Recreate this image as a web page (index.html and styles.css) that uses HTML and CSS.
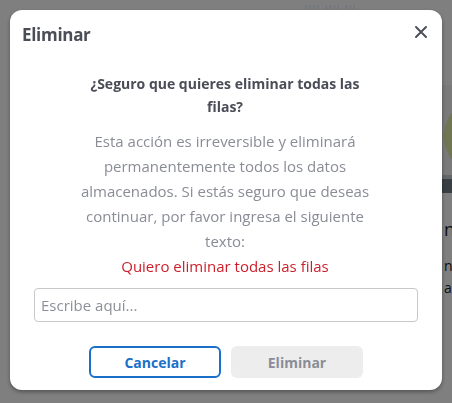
FILE: index.html
```html
<!DOCTYPE html>
<html lang="es">
<head>
<meta charset="utf-8">
<link rel="stylesheet" href="styles.css">
</head>
<body>
<div class="page">
  <div class="page-top">
    <span class="faint-text">ıııı ıııı ııı</span>
  </div>
  <div class="side">
    <div class="side-image"><div class="blob"></div></div>
    <div class="side-line-light"></div>
    <div class="side-bar"></div>
    <div class="side-title">nn</div>
    <div class="side-line">ne</div>
    <div class="side-line">ar</div>
  </div>
</div>
<div class="backdrop">
  <div class="modal">
    <div class="modal-header">
      <h2 class="modal-title">Eliminar</h2>
      <button class="close-btn" aria-label="Cerrar">
        <svg width="12" height="12" viewBox="0 0 12 12"><path d="M1 1 L11 11 M11 1 L1 11" stroke="#4a4d57" stroke-width="1.9" stroke-linecap="round"/></svg>
      </button>
    </div>
    <div class="modal-body">
      <p class="question">¿Seguro que quieres eliminar todas las filas?</p>
      <p class="desc">Esta acción es irreversible y eliminará permanentemente todos los datos almacenados. Si estás seguro que deseas continuar, por favor ingresa el siguiente texto:</p>
      <p class="confirm-text">Quiero eliminar todas las filas</p>
      <input class="confirm-input" type="text" placeholder="Escribe aquí...">
      <div class="actions">
        <button class="btn btn-outline">Cancelar</button>
        <button class="btn btn-disabled" disabled>Eliminar</button>
      </div>
    </div>
  </div>
</div>
</body>
</html>
```

FILE: styles.css
```css
* { box-sizing: border-box; }
html, body { margin: 0; padding: 0; height: 100%; }
body {
  font-family: "Open Sans", "Noto Sans", sans-serif;
  background: #fff;
  overflow: hidden;
}
.page {
  height: 100%;
  display: flex;
  flex-direction: column;
  align-items: flex-end;
}
.page-top {
  width: 100%;
  height: 30px;
  padding-left: 305px;
  font-size: 8px;
  line-height: 12px;
  color: #dcdcdc;
}
.faint-text { letter-spacing: 2px; }
.side {
  width: 10px;
  margin-top: 55px;
  display: flex;
  flex-direction: column;
}
.side-image {
  height: 90px;
  background: #f4f4f4;
  position: relative;
  overflow: hidden;
}
.blob {
  position: absolute;
  left: 2px;
  top: 22px;
  width: 40px;
  height: 58px;
  border-radius: 50%;
  background: #e2eca4;
}
.side-line-light {
  height: 4px;
  background: #c9cfd3;
}
.side-bar {
  height: 14px;
  background: #737e86;
}
.side-title {
  margin-top: 26px;
  font-size: 18px;
  color: #222;
  padding-left: 2px;
  line-height: 20px;
  white-space: nowrap;
}
.side-line {
  font-size: 14px;
  color: #222;
  padding-left: 2px;
  line-height: 22px;
  white-space: nowrap;
}
.side-title + .side-line { margin-top: 16px; }

.backdrop {
  position: fixed;
  inset: 0;
  background: rgba(0, 0, 0, 0.5);
  padding: 10px 10px 0 10px;
}
.modal {
  width: 432px;
  height: 380px;
  background: #fff;
  border-radius: 12px;
  box-shadow: 0 2px 4px rgba(0,0,0,0.35);
  padding: 14px 14px 0 12px;
}
.modal-header {
  display: flex;
  justify-content: space-between;
  align-items: flex-start;
}
.modal-title {
  margin: 0;
  font-size: 17px;
  font-weight: 700;
  color: #4a4d57;
  line-height: 20px;
  padding-top: 1px;
  letter-spacing: -0.3px;
}
.close-btn {
  border: 0;
  background: none;
  padding: 0;
  margin: 2px 1px 0 0;
  width: 12px;
  height: 12px;
  display: flex;
  cursor: pointer;
}
.modal-body {
  display: flex;
  flex-direction: column;
  align-items: center;
  text-align: center;
  padding-top: 27px;
}
.question {
  margin: 0;
  width: 300px;
  font-size: 14px;
  font-weight: 700;
  color: #4a4d57;
  line-height: 23px;
}
.desc {
  margin: 11px 0 0;
  width: 300px;
  font-size: 15px;
  color: #8a8d96;
  line-height: 25px;
}
.confirm-text {
  margin: 0;
  font-size: 15px;
  color: #cc1f2b;
  line-height: 25px;
}
.confirm-input {
  margin-top: 9px;
  width: 384px;
  height: 34px;
  border: 1px solid #c8c8cc;
  border-radius: 4px;
  padding: 0 6px;
  font-family: inherit;
  font-size: 15px;
  color: #333;
  align-self: center;
  margin-left: 2px;
}
.confirm-input::placeholder { color: #8e9099; }
.actions {
  display: flex;
  gap: 10px;
  margin-top: 24px;
  margin-left: 2px;
}
.btn {
  width: 132px;
  height: 32px;
  border-radius: 6px;
  font-family: inherit;
  font-size: 14px;
  font-weight: 700;
}
.btn-outline {
  background: #fff;
  border: 2px solid #1a6fc9;
  color: #1a6fc9;
}
.btn-disabled {
  background: #ededee;
  border: 0;
  color: #8a8d96;
}
```
